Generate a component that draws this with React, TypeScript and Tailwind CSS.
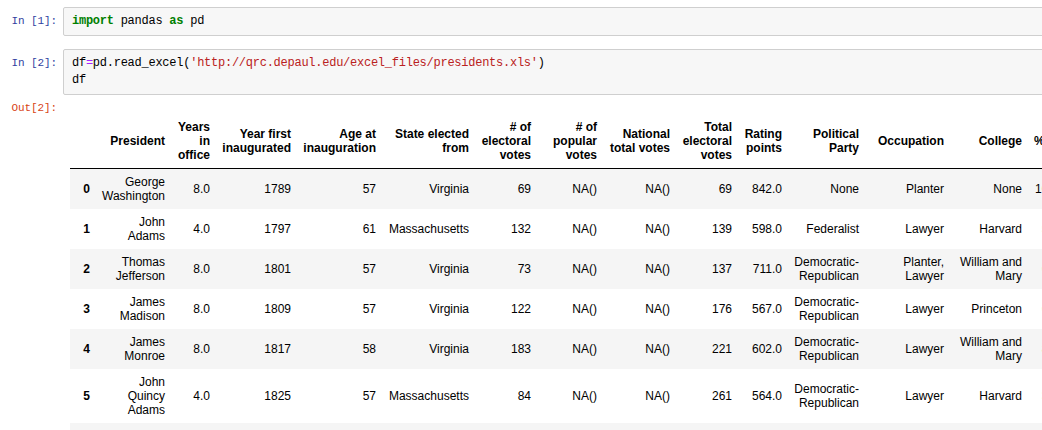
import React from 'react';

type Row = { idx: string; cells: string[] };

const headers: string[] = [
  'President',
  'Years\nin\noffice',
  'Year first\ninaugurated',
  'Age at\ninauguration',
  'State elected\nfrom',
  '# of\nelectoral\nvotes',
  '# of\npopular\nvotes',
  'National\ntotal votes',
  'Total\nelectoral\nvotes',
  'Rating\npoints',
  'Political\nParty',
  'Occupation',
  'College',
];

// border-box widths of every column, index first
const widths = [
  'w-[26px]',
  'w-[75px]',
  'w-[45px]',
  'w-[81px]',
  'w-[85px]',
  'w-[93px]',
  'w-[62px]',
  'w-[66px]',
  'w-[73px]',
  'w-[62px]',
  'w-[50px]',
  'w-[77px]',
  'w-[85px]',
  'w-[78px]',
  'w-[43px]',
];

const DR = 'Democratic-\nRepublican';

const rows: Row[] = [
  { idx: '0', cells: ['George\nWashington', '8.0', '1789', '57', 'Virginia', '69', 'NA()', 'NA()', '69', '842.0', 'None', 'Planter', 'None', '100.0'] },
  { idx: '1', cells: ['John\nAdams', '4.0', '1797', '61', 'Massachusetts', '132', 'NA()', 'NA()', '139', '598.0', 'Federalist', 'Lawyer', 'Harvard', '53.4'] },
  { idx: '2', cells: ['Thomas\nJefferson', '8.0', '1801', '57', 'Virginia', '73', 'NA()', 'NA()', '137', '711.0', DR, 'Planter,\nLawyer', 'William and\nMary', '61.5'] },
  { idx: '3', cells: ['James\nMadison', '8.0', '1809', '57', 'Virginia', '122', 'NA()', 'NA()', '176', '567.0', DR, 'Lawyer', 'Princeton', '69.3'] },
  { idx: '4', cells: ['James\nMonroe', '8.0', '1817', '58', 'Virginia', '183', 'NA()', 'NA()', '221', '602.0', DR, 'Lawyer', 'William and\nMary', '82.8'] },
  { idx: '5', cells: ['John\nQuincy\nAdams', '4.0', '1825', '57', 'Massachusetts', '84', 'NA()', 'NA()', '261', '564.0', DR, 'Lawyer', 'Harvard', '32.2'] },
  { idx: '6', cells: ['Andrew\nJackson', '8.0', '1829', '61', 'Tennessee', '178', 'NA()', 'NA()', '261', '622.0', 'Democratic', 'Lawyer', 'None', '68.2'] },
];

const mono = "font-['Liberation_Mono','DejaVu_Sans_Mono',monospace]";

function Prompt({ label, out }: { label: string; out?: boolean }) {
  return (
    <div
      className={`w-[63px] shrink-0 pr-[6px] text-right text-[11px] tracking-[-0.1px] leading-[17px] ${mono} ${
        out ? 'text-[#D84315]' : 'text-[#303F9F] pt-[6px]'
      }`}
    >
      {label}
    </div>
  );
}

function CodeBox({ children }: { children: React.ReactNode }) {
  return (
    <div
      className={`w-[1000px] shrink-0 rounded-[2px] border border-[#cfcfcf] bg-[#f7f7f7] py-[5px] pl-[8px] text-[12px] tracking-[-0.25px] leading-[17px] text-black whitespace-pre ${mono}`}
    >
      {children}
    </div>
  );
}

export default function App() {
  return (
    <div className="w-[1042px] h-[430px] overflow-hidden bg-white pt-[7px]">
      {/* In [1] */}
      <div className="flex">
        <Prompt label="In [1]:" />
        <CodeBox>
          <span className="font-bold text-[#008000]">import</span> pandas{' '}
          <span className="font-bold text-[#008000]">as</span> pd
        </CodeBox>
      </div>

      {/* In [2] */}
      <div className="flex mt-[13px]">
        <Prompt label="In [2]:" />
        <CodeBox>
          df<span className="text-[#AA22FF]">=</span>pd.read_excel(
          <span className="text-[#BA2121]">'http://qrc.depaul.edu/excel_files/presidents.xls'</span>)
          {'\n'}df
        </CodeBox>
      </div>

      {/* Out[2] */}
      <div className="flex mt-[5px]">
        <Prompt label="Out[2]:" out />
        <div className="shrink-0">
          <table className="table-fixed border-collapse w-[1001px] ml-[7px] mt-[14px] text-[12px] leading-[14px] text-black font-['Liberation_Sans',Arial,sans-serif]">
            <thead>
              <tr className="border-b border-black">
                <th className={`${widths[0]} p-[6px]`}></th>
                {headers.map((h, i) => (
                  <th
                    key={i}
                    className={`${widths[i + 1]} px-[6px] py-[6px] font-bold text-right align-middle whitespace-pre-line`}
                  >
                    {h}
                  </th>
                ))}
                <th className={`${widths[14]} px-[6px] py-[6px] font-bold text-left align-middle whitespace-nowrap`}>
                  % electoral vote
                </th>
              </tr>
            </thead>
            <tbody>
              {rows.map((r, ri) => (
                <tr key={r.idx} className={ri % 2 === 0 ? 'bg-[#f5f5f5]' : 'bg-white'}>
                  <th className="px-[6px] py-[6px] font-bold text-right align-middle">{r.idx}</th>
                  {r.cells.map((c, ci) => (
                    <td
                      key={ci}
                      className="px-[6px] py-[6px] text-right align-middle whitespace-pre-line"
                    >
                      {c}
                    </td>
                  ))}
                </tr>
              ))}
            </tbody>
          </table>
        </div>
      </div>
    </div>
  );
}
